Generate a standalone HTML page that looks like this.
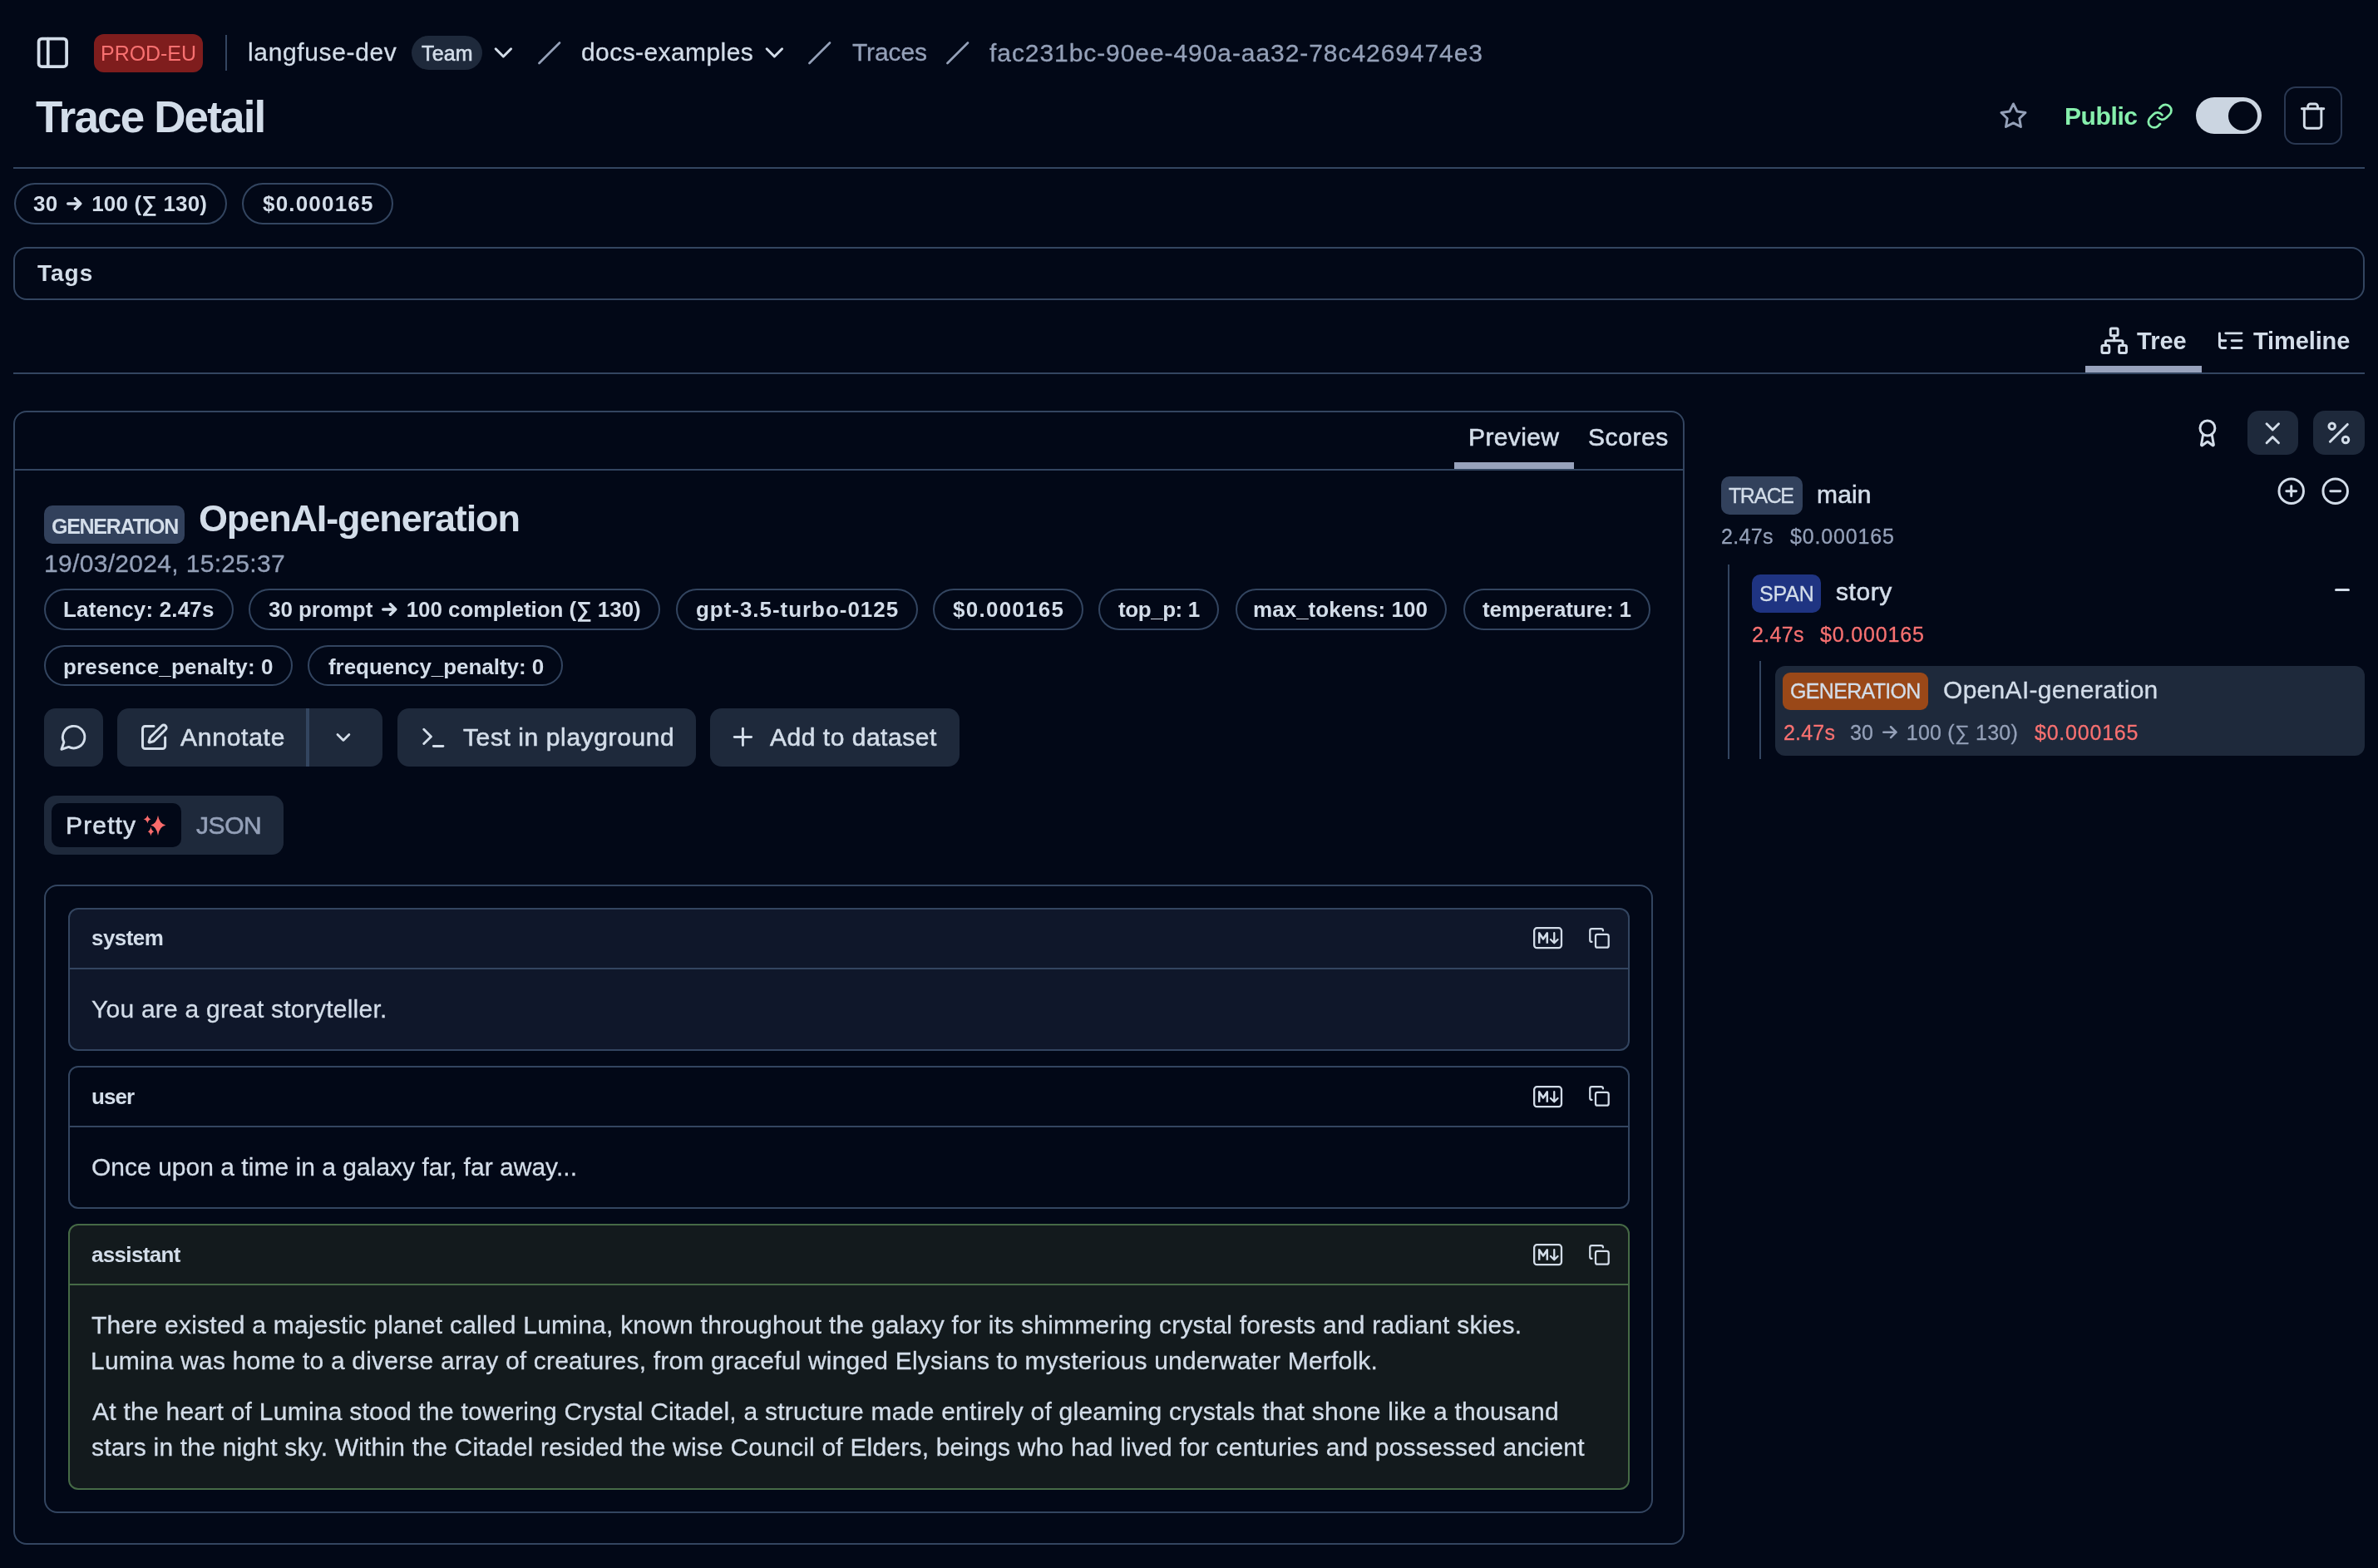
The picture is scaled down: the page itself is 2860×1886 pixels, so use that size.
<!DOCTYPE html>
<html><head><meta charset="utf-8"><title>Trace Detail</title>
<style>
html,body{margin:0;padding:0;}
body{width:2860px;height:1886px;background:#020817;position:relative;overflow:hidden;font-family:"Liberation Sans",sans-serif;color:#d3dde9;}
.b{position:absolute;box-sizing:border-box;}
.i{position:absolute;overflow:visible;}
.t{position:absolute;line-height:100px;white-space:pre;will-change:transform;}
.ar{position:relative;color:transparent;-webkit-text-stroke:0;}
.ar svg{position:absolute;}
</style></head><body>
<svg class=i style="left:41.27px;top:41.27px;" width="44.7" height="44.7" viewBox="0 0 24 24" fill="none" stroke="#d3dde9" stroke-width="2" stroke-linecap="round" stroke-linejoin="round"><rect width="18" height="18" x="3" y="3" rx="2"/><path d="M9 3v18"/></svg>
<div class=b style="left:113px;top:41px;width:131px;height:46px;background:#7f1d1d;border-radius:12px;"></div>
<div class=b style="left:271px;top:42px;width:2px;height:43px;background:#334560;"></div>
<div class=b style="left:495px;top:43px;width:85px;height:41px;background:#1e293b;border-radius:21px;"></div>
<svg class=i style="left:587.34px;top:45.25px;" width="36.75" height="36.75" viewBox="0 0 24 24" fill="none" stroke="#d3dde9" stroke-width="2" stroke-linecap="round" stroke-linejoin="round"><path d="m6 9 6 6 6-6"/></svg>
<svg class=i style="left:913.34px;top:45.25px;" width="36.75" height="36.75" viewBox="0 0 24 24" fill="none" stroke="#d3dde9" stroke-width="2" stroke-linecap="round" stroke-linejoin="round"><path d="m6 9 6 6 6-6"/></svg>
<svg class=i style="left:646.4px;top:48.9px;" width="29.46" height="29.46" viewBox="0 0 24 24" fill="none" stroke="#94a0b8" stroke-width="2.2" stroke-linecap="round" stroke-linejoin="round"><path d="M22 2 2 22"/></svg>
<svg class=i style="left:971.4px;top:48.9px;" width="29.46" height="29.46" viewBox="0 0 24 24" fill="none" stroke="#94a0b8" stroke-width="2.2" stroke-linecap="round" stroke-linejoin="round"><path d="M22 2 2 22"/></svg>
<svg class=i style="left:1136.6px;top:48.9px;" width="29.46" height="29.46" viewBox="0 0 24 24" fill="none" stroke="#94a0b8" stroke-width="2.2" stroke-linecap="round" stroke-linejoin="round"><path d="M22 2 2 22"/></svg>
<svg class=i style="left:2404.34px;top:121.84px;" width="34.93" height="34.93" viewBox="0 0 24 24" fill="none" stroke="#94a0b8" stroke-width="2" stroke-linecap="round" stroke-linejoin="round"><polygon points="12 2 15.09 8.26 22 9.27 17 14.14 18.18 21.02 12 17.77 5.82 21.02 7 14.14 2 9.27 8.91 8.26 12 2"/></svg>
<svg class=i style="left:2581.03px;top:123.03px;" width="33.29" height="33.29" viewBox="0 0 24 24" fill="none" stroke="#86efac" stroke-width="2" stroke-linecap="round" stroke-linejoin="round"><path d="M10 13a5 5 0 0 0 7.54.54l3-3a5 5 0 0 0-7.07-7.07l-1.72 1.71"/><path d="M14 11a5 5 0 0 0-7.54-.54l-3 3a5 5 0 0 0 7.07 7.07l1.71-1.71"/></svg>
<div class=b style="left:2641px;top:117px;width:79px;height:44px;background:#cbd5e1;border-radius:22px;"></div>
<div class=b style="left:2680px;top:122px;width:35px;height:35px;background:#020817;border-radius:18px;"></div>
<div class=b style="left:2747px;top:104px;width:70px;height:70px;border:2px solid #2a3852;border-radius:14px;"></div>
<svg class=i style="left:2764.07px;top:121.53px;" width="35.18" height="35.18" viewBox="0 0 24 24" fill="none" stroke="#d3dde9" stroke-width="2" stroke-linecap="round" stroke-linejoin="round"><path d="M3 6h18"/><path d="M19 6v14c0 1-1 2-2 2H7c-1 0-2-1-2-2V6"/><path d="M8 6V4c0-1 1-2 2-2h4c1 0 2 1 2 2v2"/></svg>
<div class=b style="left:16px;top:201px;width:2828px;height:2px;background:#334560;"></div>
<div class=b style="left:16.5px;top:220px;width:256px;height:50px;border:2px solid #334560;border-radius:25px;"></div>
<div class=b style="left:291px;top:220px;width:181.5px;height:50px;border:2px solid #334560;border-radius:25px;"></div>
<div class=b style="left:16px;top:297px;width:2828px;height:64px;border:2px solid #334560;border-radius:16px;"></div>
<svg class=i style="left:2524.83px;top:392.12px;" width="35.4" height="35.4" viewBox="0 0 24 24" fill="none" stroke="#d3dde9" stroke-width="2" stroke-linecap="round" stroke-linejoin="round"><rect x="16" y="16" width="6" height="6" rx="1"/><rect x="2" y="16" width="6" height="6" rx="1"/><rect x="9" y="2" width="6" height="6" rx="1"/><path d="M5 16v-3a1 1 0 0 1 1-1h12a1 1 0 0 1 1 1v3"/><path d="M12 12V8"/></svg>
<svg class=i style="left:2664.95px;top:391.62px;" width="35.41" height="35.41" viewBox="0 0 24 24" fill="none" stroke="#d3dde9" stroke-width="2" stroke-linecap="round" stroke-linejoin="round"><path d="M21 12h-8"/><path d="M21 6H8"/><path d="M21 18h-8"/><path d="M3 6v4c0 1.1.9 2 2 2h3"/><path d="M3 10v6c0 1.1.9 2 2 2h3"/></svg>
<div class=b style="left:16px;top:448px;width:2828px;height:2px;background:#334560;"></div>
<div class=b style="left:2508px;top:440px;width:140px;height:8px;background:#98a2bc;"></div>
<div class=b style="left:16px;top:494px;width:2010px;height:1364px;border:2px solid #334560;border-radius:16px;"></div>
<div class=b style="left:16px;top:564px;width:2010px;height:2px;background:#334560;"></div>
<div class=b style="left:1749px;top:556px;width:144px;height:8px;background:#98a2bc;"></div>
<div class=b style="left:53px;top:608px;width:169px;height:46px;background:#32415c;border-radius:10px;"></div>
<div class=b style="left:53px;top:708px;width:227.5px;height:50px;border:2px solid #334560;border-radius:25px;"></div>
<div class=b style="left:299.25px;top:708px;width:494.75px;height:50px;border:2px solid #334560;border-radius:25px;"></div>
<div class=b style="left:813.25px;top:708px;width:290.5px;height:50px;border:2px solid #334560;border-radius:25px;"></div>
<div class=b style="left:1121.75px;top:708px;width:181.25px;height:50px;border:2px solid #334560;border-radius:25px;"></div>
<div class=b style="left:1320.5px;top:708px;width:145.7px;height:50px;border:2px solid #334560;border-radius:25px;"></div>
<div class=b style="left:1485.5px;top:708px;width:254.5px;height:50px;border:2px solid #334560;border-radius:25px;"></div>
<div class=b style="left:1759.7px;top:708px;width:225.7px;height:50px;border:2px solid #334560;border-radius:25px;"></div>
<div class=b style="left:53px;top:776px;width:298.75px;height:49px;border:2px solid #334560;border-radius:25px;"></div>
<div class=b style="left:370px;top:776px;width:307px;height:49px;border:2px solid #334560;border-radius:25px;"></div>
<div class=b style="left:53px;top:852px;width:71px;height:70px;background:#1e293b;border-radius:14px;"></div>
<div class=b style="left:141.25px;top:852px;width:318.75px;height:70px;background:#1e293b;border-radius:14px;"></div>
<div class=b style="left:368px;top:852px;width:4px;height:70px;background:#334560;"></div>
<div class=b style="left:478.25px;top:852px;width:358.5px;height:70px;background:#1e293b;border-radius:14px;"></div>
<div class=b style="left:854.25px;top:852px;width:299.5px;height:70px;background:#1e293b;border-radius:14px;"></div>
<svg class=i style="left:71.03px;top:869.06px;" width="35.29" height="35.29" viewBox="0 0 24 24" fill="none" stroke="#d3dde9" stroke-width="2" stroke-linecap="round" stroke-linejoin="round"><path d="M7.9 20A9 9 0 1 0 4 16.1L2 22Z"/></svg>
<svg class=i style="left:167.49px;top:868.5px;" width="36.14" height="36.14" viewBox="0 0 24 24" fill="none" stroke="#d3dde9" stroke-width="2" stroke-linecap="round" stroke-linejoin="round"><path d="M12 3H5a2 2 0 0 0-2 2v14a2 2 0 0 0 2 2h14a2 2 0 0 0 2-2v-7"/><path d="M18.375 2.625a1 1 0 0 1 3 3l-9.013 9.014a2 2 0 0 1-.853.505l-2.873.84a.5.5 0 0 1-.62-.62l.84-2.873a2 2 0 0 1 .506-.852z"/></svg>
<svg class=i style="left:398.68px;top:872.96px;" width="27.83" height="27.83" viewBox="0 0 24 24" fill="none" stroke="#d3dde9" stroke-width="2.4" stroke-linecap="round" stroke-linejoin="round"><path d="m6 9 6 6 6-6"/></svg>
<svg class=i style="left:503.91px;top:869.97px;" width="34.71" height="34.71" viewBox="0 0 24 24" fill="none" stroke="#d3dde9" stroke-width="2" stroke-linecap="round" stroke-linejoin="round"><polyline points="4 17 10 11 4 5"/><line x1="12" x2="20" y1="19" y2="19"/></svg>
<svg class=i style="left:876.19px;top:869.19px;" width="34.88" height="34.88" viewBox="0 0 24 24" fill="none" stroke="#d3dde9" stroke-width="2" stroke-linecap="round" stroke-linejoin="round"><path d="M5 12h14"/><path d="M12 5v14"/></svg>
<div class=b style="left:53px;top:957px;width:288.25px;height:71px;background:#1e293b;border-radius:14px;"></div>
<div class=b style="left:62px;top:966.25px;width:156px;height:52.75px;background:#020817;border-radius:10px;"></div>
<svg class=i style="left:168px;top:975px" width="40" height="35" viewBox="0 0 40 35"><path d="M22 5.8 Q23.6 15.799999999999999 31.25 17.4 Q23.6 19.0 22 29.9 Q20.4 19.0 13.4 17.4 Q20.4 15.799999999999999 22 5.8Z" fill="#f96b6b"/><path d="M9.4 5.4 Q10.3 9.4 13.6 10.3 Q10.3 11.200000000000001 9.4 15.6 Q8.5 11.200000000000001 4.5 10.3 Q8.5 9.4 9.4 5.4Z" fill="#f96b6b"/><path d="M13.4 19.6 Q14.3 24.3 17.2 25.2 Q14.3 26.099999999999998 13.4 30.6 Q12.5 26.099999999999998 9.8 25.2 Q12.5 24.3 13.4 19.6Z" fill="#f96b6b"/></svg>
<div class=b style="left:53px;top:1064px;width:1935px;height:756px;border:2px solid #334560;border-radius:16px;"></div>
<div class=b style="left:82px;top:1091.5px;width:1878px;height:172px;background:#0f172a;border:2px solid #334560;border-radius:12px;"></div>
<div class=b style="left:82px;top:1164px;width:1878px;height:2px;background:#334560;"></div>
<div class=b style="left:82px;top:1281.5px;width:1878px;height:172px;border:2px solid #334560;border-radius:12px;"></div>
<div class=b style="left:82px;top:1354px;width:1878px;height:2px;background:#334560;"></div>
<div class=b style="left:82px;top:1472px;width:1878px;height:320px;background:#131a1d;border:2px solid #466a46;border-radius:12px;"></div>
<div class=b style="left:82px;top:1544px;width:1878px;height:2px;background:#466a46;"></div>
<svg class=i style="left:1844px;top:1115px" width="35.5" height="27" viewBox="0 0 37 28" fill="none"><rect x="1.2" y="1.2" width="34.2" height="25" rx="3.5" stroke="#d3dde9" stroke-width="2.4"/><path d="M7.5 20.5V7.5l5 7.5 5-7.5v13" stroke="#d3dde9" stroke-width="2.6" stroke-linejoin="round" fill="none"/><path d="M26.3 7.5v12.5m-4.5-4.5L26.3 20l4.5-4.5" stroke="#d3dde9" stroke-width="2.4" stroke-linecap="round" stroke-linejoin="round" fill="none"/></svg>
<svg class=i style="left:1910.28px;top:1114.88px;" width="26.95" height="26.95" viewBox="0 0 24 24" fill="none" stroke="#d3dde9" stroke-width="2" stroke-linecap="round" stroke-linejoin="round"><rect width="14" height="14" x="8" y="8" rx="2" ry="2"/><path d="M4 16c-1.1 0-2-.9-2-2V4c0-1.1.9-2 2-2h10c1.1 0 2 .9 2 2"/></svg>
<svg class=i style="left:1844px;top:1305.5px" width="35.5" height="27" viewBox="0 0 37 28" fill="none"><rect x="1.2" y="1.2" width="34.2" height="25" rx="3.5" stroke="#d3dde9" stroke-width="2.4"/><path d="M7.5 20.5V7.5l5 7.5 5-7.5v13" stroke="#d3dde9" stroke-width="2.6" stroke-linejoin="round" fill="none"/><path d="M26.3 7.5v12.5m-4.5-4.5L26.3 20l4.5-4.5" stroke="#d3dde9" stroke-width="2.4" stroke-linecap="round" stroke-linejoin="round" fill="none"/></svg>
<svg class=i style="left:1910.28px;top:1305.38px;" width="26.95" height="26.95" viewBox="0 0 24 24" fill="none" stroke="#d3dde9" stroke-width="2" stroke-linecap="round" stroke-linejoin="round"><rect width="14" height="14" x="8" y="8" rx="2" ry="2"/><path d="M4 16c-1.1 0-2-.9-2-2V4c0-1.1.9-2 2-2h10c1.1 0 2 .9 2 2"/></svg>
<svg class=i style="left:1844px;top:1496.3px" width="35.5" height="27" viewBox="0 0 37 28" fill="none"><rect x="1.2" y="1.2" width="34.2" height="25" rx="3.5" stroke="#d3dde9" stroke-width="2.4"/><path d="M7.5 20.5V7.5l5 7.5 5-7.5v13" stroke="#d3dde9" stroke-width="2.6" stroke-linejoin="round" fill="none"/><path d="M26.3 7.5v12.5m-4.5-4.5L26.3 20l4.5-4.5" stroke="#d3dde9" stroke-width="2.4" stroke-linecap="round" stroke-linejoin="round" fill="none"/></svg>
<svg class=i style="left:1910.28px;top:1496.18px;" width="26.95" height="26.95" viewBox="0 0 24 24" fill="none" stroke="#d3dde9" stroke-width="2" stroke-linecap="round" stroke-linejoin="round"><rect width="14" height="14" x="8" y="8" rx="2" ry="2"/><path d="M4 16c-1.1 0-2-.9-2-2V4c0-1.1.9-2 2-2h10c1.1 0 2 .9 2 2"/></svg>
<svg class=i style="left:2636.53px;top:502.51px;" width="35.87" height="35.87" viewBox="0 0 24 24" fill="none" stroke="#d3dde9" stroke-width="2" stroke-linecap="round" stroke-linejoin="round"><path d="m15.477 12.89 1.515 8.526a.5.5 0 0 1-.81.47l-3.58-2.687a1 1 0 0 0-1.197 0l-3.586 2.686a.5.5 0 0 1-.81-.469l1.514-8.526"/><circle cx="12" cy="8" r="6"/></svg>
<div class=b style="left:2703px;top:494px;width:61px;height:53px;background:#1e293b;border-radius:14px;"></div>
<div class=b style="left:2782px;top:494px;width:62px;height:53px;background:#1e293b;border-radius:14px;"></div>
<svg class=i style="left:2716.15px;top:503.57px;" width="34.6" height="34.6" viewBox="0 0 24 24" fill="none" stroke="#d3dde9" stroke-width="2" stroke-linecap="round" stroke-linejoin="round"><path d="m7 20 5-5 5 5"/><path d="m7 4 5 5 5-5"/></svg>
<svg class=i style="left:2794.53px;top:502.93px;" width="35.73" height="35.73" viewBox="0 0 24 24" fill="none" stroke="#d3dde9" stroke-width="2" stroke-linecap="round" stroke-linejoin="round"><line x1="19" x2="5" y1="5" y2="19"/><circle cx="6.5" cy="6.5" r="2.5"/><circle cx="17.5" cy="17.5" r="2.5"/></svg>
<div class=b style="left:2070px;top:573px;width:98px;height:46px;background:#32415c;border-radius:10px;"></div>
<svg class=i style="left:2737.92px;top:572.72px;" width="35.45" height="35.45" viewBox="0 0 24 24" fill="none" stroke="#d3dde9" stroke-width="2" stroke-linecap="round" stroke-linejoin="round"><circle cx="12" cy="12" r="10"/><path d="M8 12h8"/><path d="M12 8v8"/></svg>
<svg class=i style="left:2791.02px;top:572.72px;" width="35.45" height="35.45" viewBox="0 0 24 24" fill="none" stroke="#d3dde9" stroke-width="2" stroke-linecap="round" stroke-linejoin="round"><circle cx="12" cy="12" r="10"/><path d="M8 12h8"/></svg>
<div class=b style="left:2078px;top:679px;width:2px;height:234px;background:#334560;"></div>
<div class=b style="left:2107px;top:691px;width:83px;height:46px;background:#1f3482;border-radius:10px;"></div>
<div class=b style="left:2808px;top:707.5px;width:18px;height:3px;background:#d3dde9;border-radius:1.5px;"></div>
<div class=b style="left:2116px;top:795px;width:2px;height:118px;background:#334560;"></div>
<div class=b style="left:2135px;top:800.5px;width:709px;height:108.5px;background:#1e293b;border-radius:12px;"></div>
<div class=b style="left:2144px;top:809px;width:175px;height:45px;background:#9a4818;border-radius:9px;"></div>
<div class=t style="left:120.5px;top:14.34px;font-size:25px;letter-spacing:-0.04px;color:#f87171;">PROD-EU</div>
<div class=t style="left:298px;top:13.36px;font-size:30px;letter-spacing:0.64px;-webkit-text-stroke:0.3px currentColor;">langfuse-dev</div>
<div class=t style="left:507px;top:13.84px;font-size:25px;letter-spacing:0.17px;-webkit-text-stroke:0.6px currentColor;">Team</div>
<div class=t style="left:698.5px;top:13.36px;font-size:30px;letter-spacing:0.42px;-webkit-text-stroke:0.3px currentColor;">docs-examples</div>
<div class=t style="left:1024.5px;top:13.36px;font-size:30px;letter-spacing:-0.1px;color:#94a0b8;-webkit-text-stroke:0.3px currentColor;">Traces</div>
<div class=t style="left:1189.8px;top:13.51px;font-size:30px;letter-spacing:0.93px;color:#94a0b8;-webkit-text-stroke:0.3px currentColor;">fac231bc-90ee-490a-aa32-78c4269474e3</div>
<div class=t style="left:43.2px;top:90.64px;font-size:53px;font-weight:700;letter-spacing:-1.84px;">Trace Detail</div>
<div class=t style="left:2483px;top:89.61px;font-size:30px;font-weight:700;letter-spacing:-0.4px;color:#86efac;">Public</div>
<div class=t style="left:40px;top:195.49px;font-size:26px;font-weight:700;letter-spacing:0.17px;">30 <span class=ar>→<svg style="left:3.77px;top:6.54px" width="18.46" height="15.99" viewBox="0 0 18.46 15.99" fill="none" stroke="#d3dde9" stroke-width="3.51" stroke-linecap="round" stroke-linejoin="round"><path d="M1.76 8H16.71M10.46 1.76L16.71 8L10.46 14.23"/></svg></span> 100 (∑ 130)</div>
<div class=t style="left:316px;top:195.49px;font-size:26px;font-weight:700;letter-spacing:1.19px;">$0.000165</div>
<div class=t style="left:45px;top:279.3px;font-size:28px;font-weight:700;letter-spacing:1px;">Tags</div>
<div class=t style="left:2570.3px;top:360.25px;font-size:29px;font-weight:700;letter-spacing:0.03px;">Tree</div>
<div class=t style="left:2710px;top:360.25px;font-size:29px;font-weight:700;letter-spacing:-0.11px;">Timeline</div>
<div class=t style="left:1765.5px;top:475.61px;font-size:30px;letter-spacing:0.37px;-webkit-text-stroke:0.6px currentColor;">Preview</div>
<div class=t style="left:1910px;top:475.61px;font-size:30px;letter-spacing:0.6px;-webkit-text-stroke:0.6px currentColor;">Scores</div>
<div class=t style="left:61.5px;top:582.59px;font-size:25px;font-weight:700;letter-spacing:-1.28px;">GENERATION</div>
<div class=t style="left:238.5px;top:574.41px;font-size:45px;font-weight:700;letter-spacing:-1.13px;">OpenAI-generation</div>
<div class=t style="left:52.5px;top:627.61px;font-size:30px;letter-spacing:0.32px;color:#94a0b8;-webkit-text-stroke:0.3px currentColor;">19/03/2024, 15:25:37</div>
<div class=t style="left:76px;top:683.49px;font-size:26px;font-weight:700;letter-spacing:0.17px;">Latency: 2.47s</div>
<div class=t style="left:322.75px;top:683.49px;font-size:26px;font-weight:700;letter-spacing:-0.04px;">30 prompt <span class=ar>→<svg style="left:3.77px;top:6.54px" width="18.46" height="15.99" viewBox="0 0 18.46 15.99" fill="none" stroke="#d3dde9" stroke-width="3.51" stroke-linecap="round" stroke-linejoin="round"><path d="M1.76 8H16.71M10.46 1.76L16.71 8L10.46 14.23"/></svg></span> 100 completion (∑ 130)</div>
<div class=t style="left:836.5px;top:683.49px;font-size:26px;font-weight:700;letter-spacing:0.96px;">gpt-3.5-turbo-0125</div>
<div class=t style="left:1145.6px;top:683.49px;font-size:26px;font-weight:700;letter-spacing:1.26px;">$0.000165</div>
<div class=t style="left:1344.6px;top:683.49px;font-size:26px;font-weight:700;letter-spacing:-0.43px;">top_p: 1</div>
<div class=t style="left:1506.6px;top:683.49px;font-size:26px;font-weight:700;letter-spacing:0.03px;">max_tokens: 100</div>
<div class=t style="left:1782.8px;top:683.49px;font-size:26px;font-weight:700;letter-spacing:-0.12px;">temperature: 1</div>
<div class=t style="left:76px;top:751.74px;font-size:26px;font-weight:700;letter-spacing:0.14px;">presence_penalty: 0</div>
<div class=t style="left:394.5px;top:751.74px;font-size:26px;font-weight:700;letter-spacing:-0.05px;">frequency_penalty: 0</div>
<div class=t style="left:217px;top:837.11px;font-size:30px;letter-spacing:0.75px;-webkit-text-stroke:0.6px currentColor;">Annotate</div>
<div class=t style="left:557.25px;top:837.11px;font-size:30px;letter-spacing:0.6px;-webkit-text-stroke:0.6px currentColor;">Test in playground</div>
<div class=t style="left:926.25px;top:837.11px;font-size:30px;letter-spacing:0.52px;-webkit-text-stroke:0.6px currentColor;">Add to dataset</div>
<div class=t style="left:79.25px;top:943.36px;font-size:30px;letter-spacing:1.15px;-webkit-text-stroke:0.6px currentColor;">Pretty</div>
<div class=t style="left:236.25px;top:943.36px;font-size:30px;letter-spacing:-0.42px;color:#94a0b8;-webkit-text-stroke:0.6px currentColor;">JSON</div>
<div class=t style="left:109.75px;top:1078.49px;font-size:26px;font-weight:700;letter-spacing:-0.55px;">system</div>
<div class=t style="left:109.75px;top:1163.86px;font-size:30px;letter-spacing:0.23px;-webkit-text-stroke:0.3px currentColor;">You are a great storyteller.</div>
<div class=t style="left:109.75px;top:1268.99px;font-size:26px;font-weight:700;letter-spacing:-0.95px;">user</div>
<div class=t style="left:109.75px;top:1353.61px;font-size:30px;letter-spacing:0.02px;-webkit-text-stroke:0.3px currentColor;">Once upon a time in a galaxy far, far away...</div>
<div class=t style="left:109.75px;top:1458.79px;font-size:26px;font-weight:700;letter-spacing:-0.67px;">assistant</div>
<div class=t style="left:109.75px;top:1544.4px;font-size:30px;letter-spacing:0.23px;-webkit-text-stroke:0.3px currentColor;">There existed a majestic planet called Lumina, known throughout the galaxy for its shimmering crystal forests and radiant skies.</div>
<div class=t style="left:108.75px;top:1586.9px;font-size:30px;letter-spacing:0.2px;-webkit-text-stroke:0.3px currentColor;">Lumina was home to a diverse array of creatures, from graceful winged Elysians to mysterious underwater Merfolk.</div>
<div class=t style="left:110.75px;top:1648.01px;font-size:30px;letter-spacing:0.25px;-webkit-text-stroke:0.3px currentColor;">At the heart of Lumina stood the towering Crystal Citadel, a structure made entirely of gleaming crystals that shone like a thousand</div>
<div class=t style="left:109.75px;top:1691.01px;font-size:30px;letter-spacing:0.2px;-webkit-text-stroke:0.3px currentColor;">stars in the night sky. Within the Citadel resided the wise Council of Elders, beings who had lived for centuries and possessed ancient</div>
<div class=t style="left:2079.2px;top:545.54px;font-size:25px;letter-spacing:-1.45px;-webkit-text-stroke:0.3px currentColor;">TRACE</div>
<div class=t style="left:2184.7px;top:544.61px;font-size:30px;letter-spacing:0.17px;-webkit-text-stroke:0.6px currentColor;">main</div>
<div class=t style="left:2070.25px;top:595.09px;font-size:25px;letter-spacing:0.31px;color:#94a0b8;-webkit-text-stroke:0.3px currentColor;">2.47s</div>
<div class=t style="left:2152.5px;top:595.09px;font-size:25px;letter-spacing:0.84px;color:#94a0b8;-webkit-text-stroke:0.3px currentColor;">$0.000165</div>
<div class=t style="left:2116px;top:663.84px;font-size:25px;letter-spacing:-0.17px;-webkit-text-stroke:0.3px currentColor;">SPAN</div>
<div class=t style="left:2207.75px;top:662.11px;font-size:30px;letter-spacing:0.56px;-webkit-text-stroke:0.6px currentColor;">story</div>
<div class=t style="left:2107.25px;top:713.34px;font-size:25px;letter-spacing:0.31px;color:#f87171;-webkit-text-stroke:0.3px currentColor;">2.47s</div>
<div class=t style="left:2189.25px;top:713.34px;font-size:25px;letter-spacing:0.84px;color:#f87171;-webkit-text-stroke:0.3px currentColor;">$0.000165</div>
<div class=t style="left:2152.75px;top:781.34px;font-size:25px;letter-spacing:-0.67px;-webkit-text-stroke:0.3px currentColor;">GENERATION</div>
<div class=t style="left:2337px;top:779.61px;font-size:30px;letter-spacing:0.3px;-webkit-text-stroke:0.3px currentColor;">OpenAI-generation</div>
<div class=t style="left:2144.5px;top:831.34px;font-size:25px;letter-spacing:0.19px;color:#f87171;-webkit-text-stroke:0.3px currentColor;">2.47s</div>
<div class=t style="left:2225.25px;top:831.34px;font-size:25px;letter-spacing:0.22px;color:#94a0b8;-webkit-text-stroke:0.3px currentColor;">30 <span class=ar>→<svg style="left:3.62px;top:6.29px" width="17.75" height="15.38" viewBox="0 0 17.75 15.38" fill="none" stroke="#94a0b8" stroke-width="2.5" stroke-linecap="round" stroke-linejoin="round"><path d="M1.25 7.69H16.5M10.06 1.25L16.5 7.69L10.06 14.12"/></svg></span> 100 (∑ 130)</div>
<div class=t style="left:2446.75px;top:831.34px;font-size:25px;letter-spacing:0.78px;color:#f87171;-webkit-text-stroke:0.3px currentColor;">$0.000165</div>
</body></html>
